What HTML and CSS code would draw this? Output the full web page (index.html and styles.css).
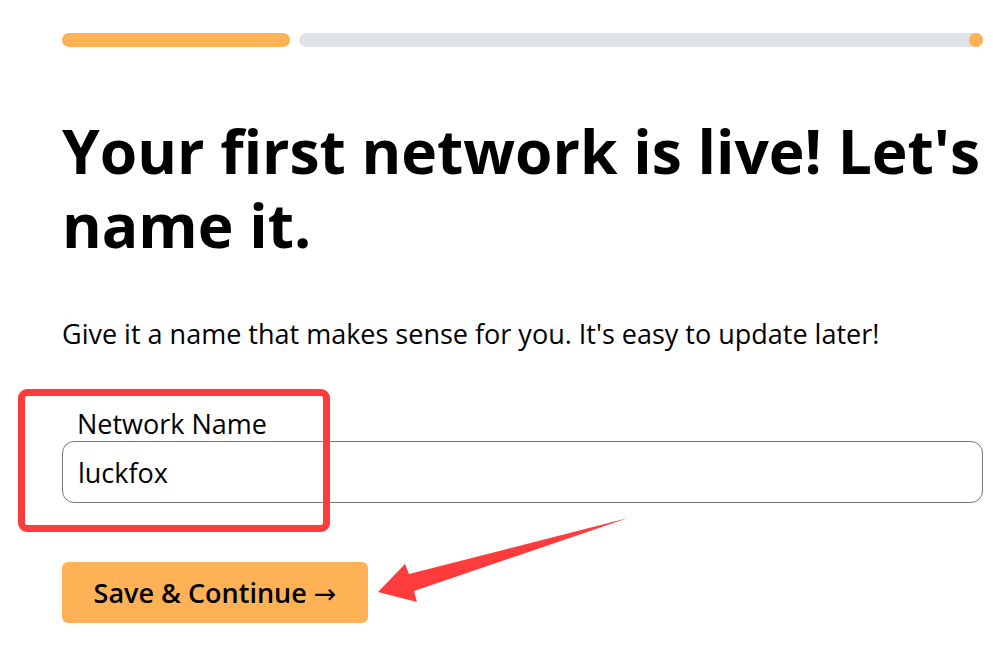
FILE: index.html
```html
<!DOCTYPE html>
<html lang="en">
<head>
<meta charset="utf-8">
<title>Name your network</title>
<link rel="stylesheet" href="styles.css">
</head>
<body>
<main class="page">
  <div class="progress">
    <div class="progress-done"></div>
    <div class="progress-rest"><span class="progress-dot"></span></div>
  </div>
  <h1 class="title">Your first network is live! Let's name it.</h1>
  <p class="lead">Give it a name that makes sense for you. It's easy to update later!</p>
  <div class="field">
    <label class="field-label" for="netname">Network Name</label>
    <input class="field-input" id="netname" type="text" value="luckfox">
  </div>
  <button class="btn" type="button">Save &amp; Continue <span class="btn-arrow">→</span></button>
</main>
<div class="annot-box"></div>
<svg class="annot-arrow" width="993" height="645" viewBox="0 0 993 645" aria-hidden="true">
  <polygon points="378,592 405,564 409,574 628,518 414,591 417,602" fill="#ff3b3b"/>
</svg>
</body>
</html>
```
FILE: styles.css
```css
html, body {
  margin: 0;
  padding: 0;
  background: #ffffff;
}
body {
  font-family: "Open Sans", "Noto Sans", sans-serif;
  color: #000;
  position: relative;
  width: 993px;
  height: 645px;
  overflow: hidden;
}
.page {
  padding: 33px 10px 0 62px;
  display: flex;
  flex-direction: column;
}
.progress {
  display: flex;
  gap: 9px;
  height: 14px;
  flex: none;
}
.progress-done {
  width: 228px;
  background: #ffb155;
  border-radius: 7px;
}
.progress-rest {
  flex: 1;
  background: #dfe2e6;
  border-radius: 7px;
  display: flex;
  justify-content: flex-end;
}
.progress-dot {
  width: 14px;
  height: 14px;
  border-radius: 50%;
  background: #ffb155;
}
.title {
  font-size: 60.5px;
  font-weight: 700;
  line-height: 74px;
  margin: 67px 0 0;
}
.lead {
  font-size: 27px;
  line-height: 36px;
  margin: 54px 0 0;
}
.field {
  margin-top: 57px;
  display: flex;
  flex-direction: column;
}
.field-label {
  font-size: 27px;
  line-height: 30px;
  padding-left: 15px;
  margin-bottom: 2px;
}
.field-input {
  font-family: inherit;
  font-size: 27px;
  height: 62px;
  box-sizing: border-box;
  border: 1px solid #767676;
  border-radius: 12px;
  padding: 0 15px;
  color: #000;
  outline: none;
}
.btn {
  align-self: flex-start;
  margin-top: 59px;
  font-family: inherit;
  font-size: 27px;
  font-weight: 600;
  background: #ffb155;
  border: none;
  border-radius: 6px;
  height: 61px;
  width: 306px;
  color: #000;
  padding: 0;
}
.btn-arrow {
  font-family: "DejaVu Sans", sans-serif;
  font-weight: 400;
}
.annot-box {
  position: absolute;
  left: 18px;
  top: 389px;
  width: 312px;
  height: 143px;
  box-sizing: border-box;
  border: 7px solid #ff3b3b;
  border-radius: 9px;
}
.annot-arrow {
  position: absolute;
  left: 0;
  top: 0;
}
```
